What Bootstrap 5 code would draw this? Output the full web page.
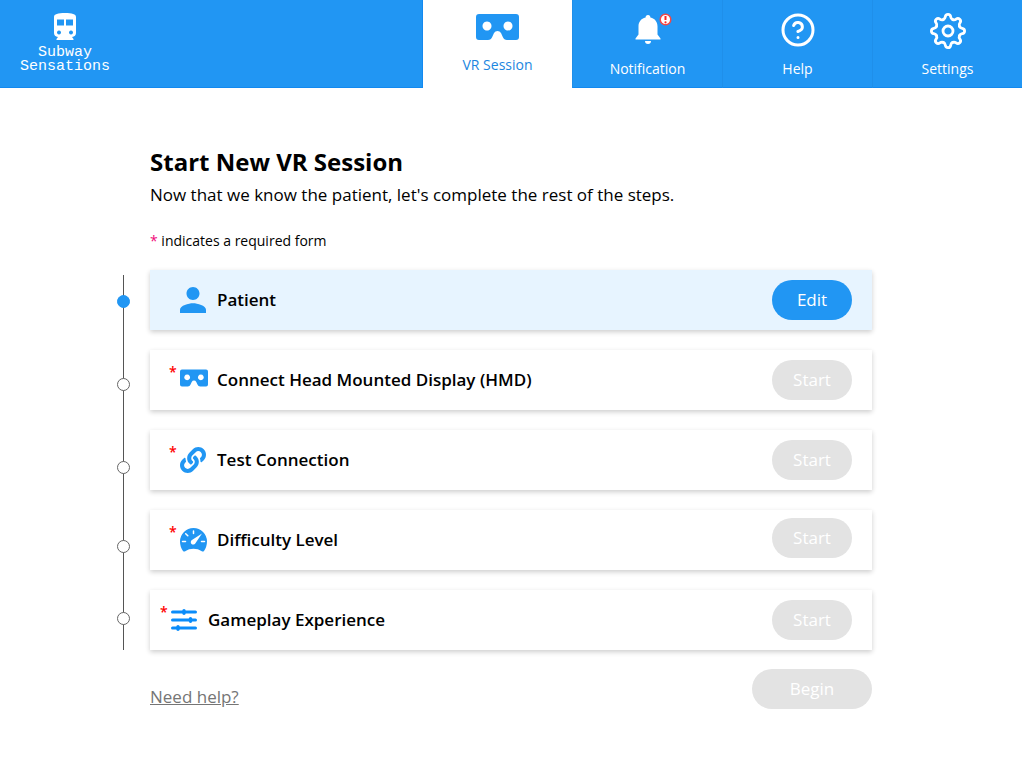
<!DOCTYPE html>
<html lang="en">
<head>
<meta charset="utf-8">
<meta name="viewport" content="width=device-width, initial-scale=1">
<title>Subway Sensations</title>
<link href="https://cdn.jsdelivr.net/npm/bootstrap@5.3.0/dist/css/bootstrap.min.css" rel="stylesheet">
<style>
  :root { --brand: #2196f3; }
  body { font-family: "Open Sans", "Noto Sans", sans-serif; color: #000; background: #fff; }
  svg { display: block; flex: none; }
  .topbar { background: var(--brand); height: 88px; border-bottom: 1px solid #1289f0; }
  .brand { width: 130px; padding-top: 13px; gap: 6px; font: 15px/14px "Liberation Mono", monospace; color: #fff; text-decoration: none; }
  .tab { width: 150px; height: 88px; padding-top: 12px; font-size: 14px; line-height: 20px; color: #fff; text-decoration: none; border-left: 1px solid #1f8fea; }
  .tab.current { background: #fff; color: #1c86e0; border-color: #1289f0; }
  .tab-icon { height: 47px; }
  .current .tab-icon { height: 43px; padding-top: 2px; color: var(--brand); }
  .alert-dot { top: 1px; left: 24px; }
  .session { margin: 0 150px; padding-top: 59px; }
  .title { font-size: 24px; line-height: 30px; font-weight: 700; }
  .intro { font-size: 17px; line-height: 24px; margin-top: 6px; }
  .hint { font-size: 14px; line-height: 20px; margin-top: 24px; margin-bottom: 19px; }
  .hint span { color: #f0087a; }
  .steps { margin-left: -34px; gap: 19px; }
  .rail { width: 15px; padding-top: 25px; display: grid; grid-template-rows: 83px 83px 79px 72px 1fr; justify-items: center; background: linear-gradient(#555, #555) center 5px / 1px 100% no-repeat; }
  .stop { width: 13px; height: 13px; border: 1px solid #666; border-radius: 50%; background: #fff; }
  .stop.done { background: var(--brand); border-color: var(--brand); }
  .cards { gap: 20px; }
  .step { height: 60px; padding: 0 20px 0 18px; background: #fff; box-shadow: 0 2px 5px rgba(0,0,0,.2); }
  .step.filled { background: #e7f4ff; }
  .step.wide-label { padding-left: 9px; }
  .req { width: 12px; padding-left: 1px; font-size: 14px; line-height: 20px; font-weight: 600; color: #f00; align-self: flex-start; margin-top: 12px; }
  .icon-box { width: 28px; height: 28px; color: var(--brand); }
  .step h2 { font-size: 17px; line-height: 24px; font-weight: 600; margin: 0 0 0 9px; }
  .pill { width: 80px; height: 40px; border: 0; border-radius: 20px; padding: 0; background: #e3e3e3; color: #fff; font-size: 17px; line-height: 24px; }
  .pill.go { background: var(--brand); }
  .pill.begin { width: 120px; }
  .foot { padding-top: 19px; }
  .help-link { color: #757575; font-size: 17px; line-height: 24px; margin-top: 16px; }
</style>
</head>
<body>
<svg width="0" height="0" class="position-absolute" aria-hidden="true">
  <symbol id="goggles" viewBox="0 0 43 26"><path fill="currentColor" fill-rule="evenodd" d="M3 0H40Q43 0 43 3V23Q43 26 40 26H31Q28 26 26.800 23L25 19Q23.800 17 21.500 17T18 19L16.200 23Q15 26 12 26H3Q0 26 0 23V3Q0 0 3 0ZM11 7.500a4.500 4.500 0 1 0 .01 0ZM32 7.500a4.500 4.500 0 1 0 .01 0Z"/></symbol>
</svg>
<header class="topbar d-flex">
  <a href="#" class="brand d-flex flex-column align-items-center text-center me-auto">
    <svg width="22" height="27" viewBox="0 0 22 27" aria-hidden="true"><path fill="#fff" fill-rule="evenodd" d="M11 0C18 0 22 1 22 4V20Q22 23.500 18 24L19.500 26V27H2.500V26L4 24Q0 23.500 0 20V4C0 1 4 0 11 0ZM3 6.500V12.500H10V6.500ZM12 6.500V12.500H19V6.500ZM5 17.500a2 2 0 1 0 .01 0ZM17 17.500a2 2 0 1 0 .01 0Z"/></svg>
    <span>Subway<br>Sensations</span>
  </a>
  <nav class="d-flex">
    <a href="#" class="tab current d-flex flex-column align-items-center" aria-current="page">
      <span class="tab-icon"><svg width="43" height="26" aria-hidden="true"><use href="#goggles"/></svg></span>VR Session</a>
    <a href="#" class="tab d-flex flex-column align-items-center">
      <span class="tab-icon position-relative"><svg width="26" height="32" viewBox="0 0 26 32" aria-hidden="true"><path fill="#fff" d="M13 3c1.600 0 2.400 1 2.400 2.500C20 6.500 22.500 10 22.500 14.500V22.500L25.500 26.500V27.500H.5V26.500L3.500 22.500V14.500C3.500 10 6 6.500 10.600 5.500C10.600 4 11.400 3 13 3ZM10 29H16a3 3 0 0 1-6 0Z"/></svg>
        <svg class="alert-dot position-absolute" width="13" height="13" viewBox="0 0 13 13" aria-hidden="true"><circle cx="6.500" cy="6.500" r="5.300" fill="#fff" stroke="#f04848" stroke-width="1.500"/><path d="M6.500 3V7" stroke="#f22" stroke-width="2"/><circle cx="6.500" cy="9.300" r="1.100" fill="#f22"/></svg></span>Notification</a>
    <a href="#" class="tab d-flex flex-column align-items-center">
      <span class="tab-icon"><svg width="36" height="36" viewBox="0 0 24 24" fill="none" stroke="#fff" stroke-width="2" stroke-linecap="round" stroke-linejoin="round" aria-hidden="true"><circle cx="12" cy="12" r="10"/><path d="M9.090 9a3 3 0 0 1 5.830 1c0 2-3 3-3 3M12 17h.010"/></svg></span>Help</a>
    <a href="#" class="tab d-flex flex-column align-items-center">
      <span class="tab-icon"><svg width="38" height="38" viewBox="-19 -19 38 38" fill="none" stroke="#fff" stroke-width="2.800" stroke-linecap="round" aria-hidden="true"><defs><path id="tooth" d="M-4.700-11.400C-3.200-12-2.900-12.800-2.700-14.200C-2.500-15.800-1.500-16.600 0-16.600S2.500-15.800 2.700-14.200C2.900-12.800 3.200-12 4.700-11.400"/></defs><use href="#tooth"/><use href="#tooth" transform="rotate(45)"/><use href="#tooth" transform="rotate(90)"/><use href="#tooth" transform="rotate(135)"/><use href="#tooth" transform="rotate(180)"/><use href="#tooth" transform="rotate(225)"/><use href="#tooth" transform="rotate(270)"/><use href="#tooth" transform="rotate(315)"/><circle r="5"/></svg></span>Settings</a>
  </nav>
</header>

<main class="session">
  <h1 class="title mb-0">Start New VR Session</h1>
  <p class="intro mb-0">Now that we know the patient, let's complete the rest of the steps.</p>
  <p class="hint"><span>*</span> indicates a required form</p>

  <div class="steps d-flex">
    <div class="rail flex-shrink-0" aria-hidden="true">
      <span class="stop done"></span><span class="stop"></span><span class="stop"></span><span class="stop"></span><span class="stop"></span>
    </div>
    <div class="cards d-flex flex-column flex-grow-1">
      <section class="step filled d-flex align-items-center">
        <span class="req"></span>
        <span class="icon-box d-flex align-items-center"><svg width="26" height="26" viewBox="4 4 16 16" aria-hidden="true"><path fill="currentColor" d="M12 12c2.210 0 4-1.790 4-4s-1.790-4-4-4-4 1.790-4 4 1.790 4 4 4zm0 2c-2.670 0-8 1.340-8 4v2h16v-2c0-2.660-5.330-4-8-4z"/></svg></span>
        <h2>Patient</h2>
        <button type="button" class="pill go ms-auto">Edit</button>
      </section>
      <section class="step d-flex align-items-center">
        <span class="req">*</span>
        <span class="icon-box d-flex align-items-center"><svg width="28" height="18" class="mb-1" aria-hidden="true"><use href="#goggles"/></svg></span>
        <h2>Connect Head Mounted Display (HMD)</h2>
        <button type="button" class="pill ms-auto">Start</button>
      </section>
      <section class="step d-flex align-items-center">
        <span class="req">*</span>
        <span class="icon-box d-flex align-items-center"><svg width="26" height="26" viewBox="0 0 512 512" aria-hidden="true"><path fill="currentColor" d="M326.612 185.391c59.747 59.809 58.927 155.698.36 214.590-.11.12-.24.25-.36.37l-67.200 67.200c-59.270 59.270-155.699 59.262-214.960 0-59.270-59.260-59.270-155.700 0-214.960l37.106-37.106c9.840-9.840 26.786-3.300 27.294 10.606.648 17.722 3.826 35.527 9.690 52.721 1.986 5.822.567 12.262-3.783 16.612l-13.087 13.087c-28.026 28.026-28.905 73.660-1.155 101.960 28.024 28.579 74.086 28.749 102.325.51l67.200-67.190c28.191-28.191 28.073-73.757 0-101.830-3.701-3.694-7.429-6.564-10.341-8.569a16.037 16.037 0 0 1-6.947-12.606c-.396-10.567 3.348-21.456 11.698-29.806l21.054-21.055c5.521-5.521 14.182-6.199 20.584-1.731a152.482 152.482 0 0 1 20.522 17.197zM467.547 44.449c-59.261-59.262-155.690-59.270-214.960 0l-67.200 67.200c-.12.12-.25.25-.36.37-58.566 58.892-59.387 154.781.36 214.590a152.454 152.454 0 0 0 20.521 17.196c6.402 4.468 15.064 3.789 20.584-1.731l21.054-21.055c8.350-8.350 12.094-19.239 11.698-29.806a16.037 16.037 0 0 0-6.947-12.606c-2.912-2.005-6.640-4.875-10.341-8.569-28.073-28.073-28.191-73.639 0-101.830l67.200-67.190c28.239-28.239 74.300-28.069 102.325.51 27.750 28.300 26.872 73.934-1.155 101.960l-13.087 13.087c-4.350 4.350-5.769 10.790-3.783 16.612 5.864 17.194 9.042 34.999 9.690 52.721.509 13.906 17.454 20.446 27.294 10.606l37.106-37.106c59.271-59.259 59.271-155.699.001-214.959z"/></svg></span>
        <h2>Test Connection</h2>
        <button type="button" class="pill ms-auto">Start</button>
      </section>
      <section class="step d-flex align-items-center">
        <span class="req">*</span>
        <span class="icon-box d-flex align-items-center"><svg width="27" height="24" viewBox="0 0 27 24" aria-hidden="true"><path fill="currentColor" d="M13.500 0A13.500 13.500 0 0 0 0 13.500C0 17 1.200 20.500 3 23Q4 24 5.200 23.300C10 20 17 20 21.800 23.300Q23 24 24 23C25.800 20.500 27 17 27 13.500A13.500 13.500 0 0 0 13.500 0Z"/><g stroke="#fff" stroke-width="1.500" stroke-linecap="round"><path d="M13.500 3V5.500M2.500 13.500H5.500M21.500 13.500H24.500M5.700 5.700L7.800 7.800"/></g><path fill="#fff" d="M22 5.500L15.600 15A2.500 2.500 0 1 1 12.300 11.800Z"/></svg></span>
        <h2>Difficulty Level</h2>
        <button type="button" class="pill ms-auto mb-1">Start</button>
      </section>
      <section class="step wide-label d-flex align-items-center">
        <span class="req">*</span>
        <span class="icon-box d-flex align-items-center"><svg width="26" height="22" viewBox="0 0 26 22" aria-hidden="true"><g stroke="#0a8cfa" stroke-width="3" stroke-linecap="round"><path d="M1.500 3H24.500M1.500 11H24.500M1.500 19H24.500"/><path stroke-width="3.400" d="M13 1.700V4.300M19.500 9.700V12.300M7 17.700V20.300"/></g></svg></span>
        <h2>Gameplay Experience</h2>
        <button type="button" class="pill ms-auto">Start</button>
      </section>
    </div>
  </div>

  <div class="foot d-flex justify-content-between align-items-start">
    <a href="#" class="help-link">Need help?</a>
    <button type="button" class="pill begin">Begin</button>
  </div>
</main>
<script src="https://cdn.jsdelivr.net/npm/bootstrap@5.3.0/dist/js/bootstrap.bundle.min.js"></script>
</body>
</html>
